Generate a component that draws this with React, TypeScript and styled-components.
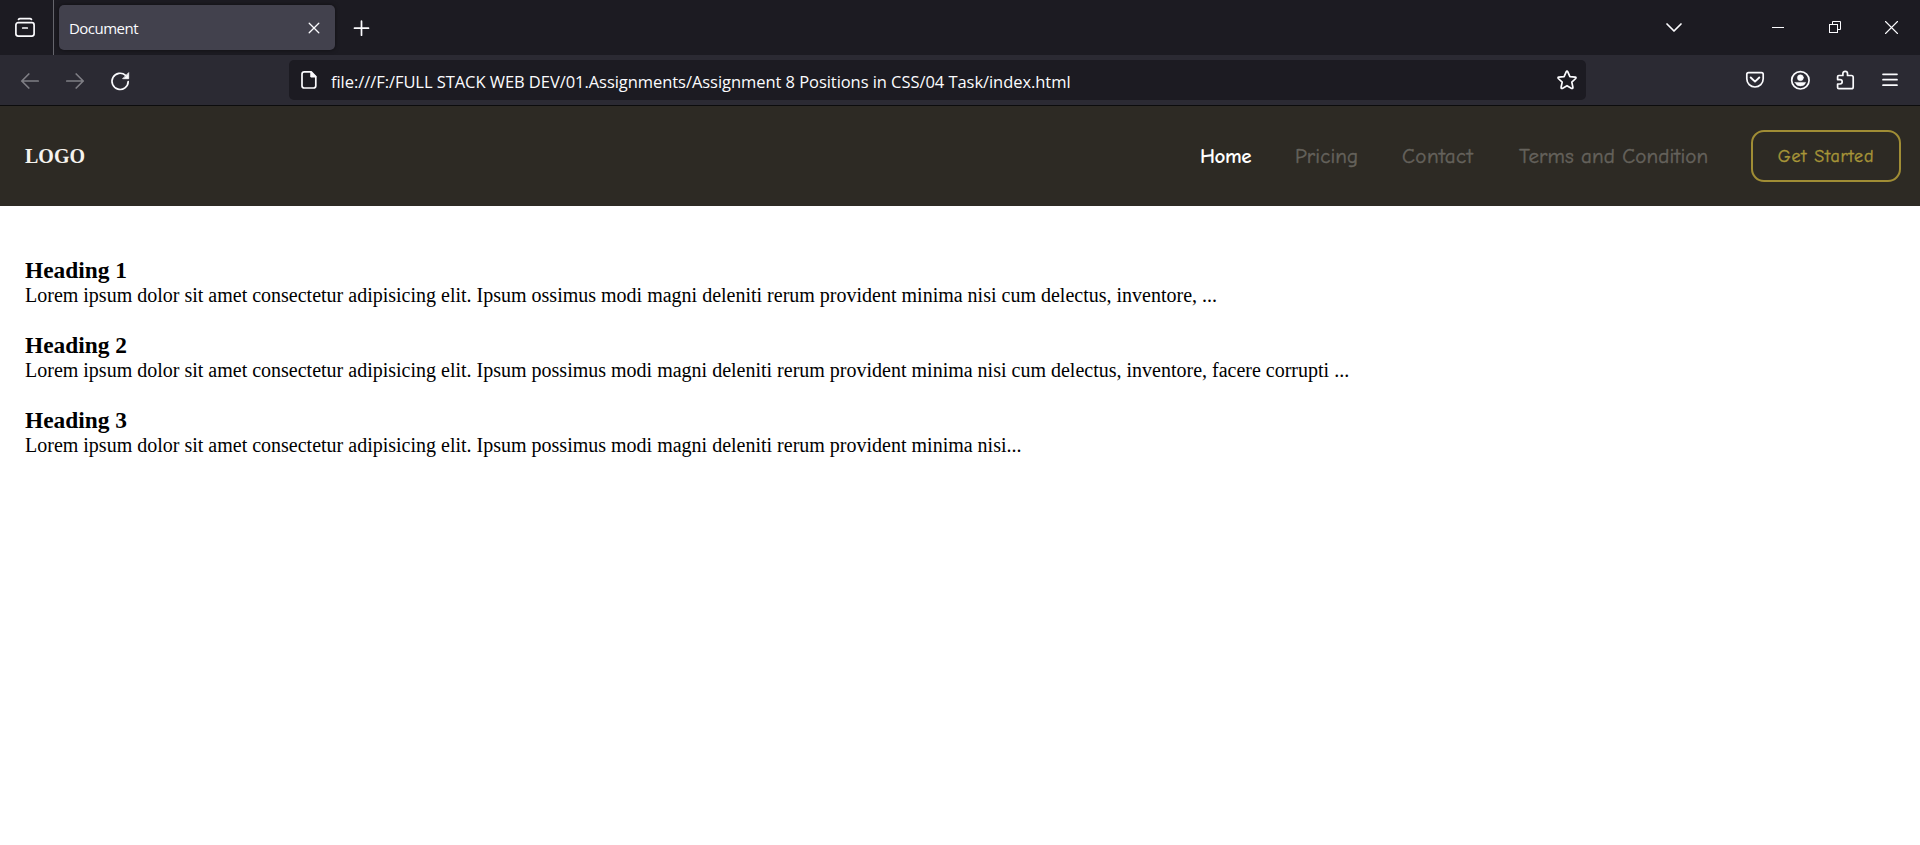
import React from "react";
import styled, { createGlobalStyle } from "styled-components";

const GlobalStyle = createGlobalStyle`
  * { box-sizing: border-box; }
  body {
    margin: 0;
    background: #fff;
    font-family: "Liberation Serif", "Times New Roman", serif;
  }
  h1, h2, p { margin: 0; }
`;

const Window = styled.div`
  display: flex;
  flex-direction: column;
  height: 845px;
  overflow: hidden;
`;

const TabStrip = styled.div`
  display: flex;
  height: 55px;
  background: #1c1b22;
  color: #fbfbfe;
`;

const ViewButton = styled.div`
  display: flex;
  align-items: center;
  width: 54px;
  padding-left: 13px;
  border-right: 1px solid #65656c;
`;

const Tab = styled.div`
  display: flex;
  align-items: center;
  justify-content: space-between;
  width: 276px;
  height: 45px;
  margin: 5px 0 0 5px;
  padding: 0 9px 0 10px;
  border-radius: 5px;
  background: #42414d;
  box-shadow: 0 0 4px rgba(0, 0, 0, 0.5);
`;

const TabTitle = styled.span`
  font: 15px/20px "Open Sans", sans-serif;
  letter-spacing: -0.52px;
`;

const NewTab = styled.div`
  display: flex;
  align-items: center;
  margin-left: 14px;
`;

const WindowControls = styled.div`
  display: flex;
  align-items: center;
  margin-left: auto;
  padding: 0 16px 2px 0;
`;

const Control = styled.div<{ $after?: number }>`
  display: flex;
  margin-right: ${(p) => p.$after ?? 0}px;
`;

const Toolbar = styled.div`
  display: flex;
  align-items: center;
  height: 51px;
  background: #2b2a33;
  border-bottom: 1px solid #0c0c0d;
  color: #fbfbfe;
`;

const History = styled.div`
  display: flex;
  align-items: center;
  gap: 21px;
  width: 289px;
  padding: 1px 0 0 18px;
`;

const AddressBar = styled.div`
  display: flex;
  align-items: center;
  width: 1297px;
  height: 40px;
  padding: 0 7px 0 8px;
  border-radius: 5px;
  background: #1c1b22;
`;

const Address = styled.span`
  flex: 1;
  padding: 3px 0 0 10px;
  font: 16.5px/22px "Open Sans", sans-serif;
  letter-spacing: -0.055px;
  white-space: nowrap;
`;

const Extensions = styled.div`
  display: flex;
  gap: 21px;
  margin-left: auto;
  padding-right: 18px;
`;

const Navbar = styled.header`
  display: flex;
  align-items: center;
  justify-content: space-between;
  height: 100px;
  padding: 0 19px 0 25px;
  background: #2d2a24;
`;

const Logo = styled.h1`
  color: #f5f3ee;
  font-size: 20px;
  line-height: 24px;
`;

const Links = styled.nav`
  display: flex;
  align-items: center;
  font-family: "Comic Neue", "Comic Sans MS", "Open Sans", sans-serif;
`;

const NavLink = styled.a<{ $width: number; $spacing: number; $active?: boolean }>`
  width: ${(p) => p.$width}px;
  margin-right: 43px;
  color: ${(p) => (p.$active ? "#fff" : "#65625c")};
  font-size: 21px;
  font-weight: ${(p) => (p.$active ? 700 : 400)};
  line-height: 28px;
  letter-spacing: ${(p) => p.$spacing}px;
  white-space: nowrap;
  -webkit-text-stroke: ${(p) => (p.$active ? 0 : 0.4)}px currentColor;
`;

const StartButton = styled.button`
  width: 150px;
  height: 52px;
  padding: 2px 0 0;
  border: 2px solid #a08d35;
  border-radius: 13px;
  background: transparent;
  color: #a89638;
  font: 400 18px/24px "Comic Neue", "Comic Sans MS", "Open Sans", sans-serif;
  letter-spacing: 0.85px;
  -webkit-text-stroke: 0.4px currentColor;
`;

const Content = styled.main`
  display: flex;
  flex-direction: column;
  gap: 25px;
  padding: 51px 25px 0;
  color: #000;
`;

const Heading = styled.h2`
  font-size: 23.4px;
  line-height: 27px;
`;

const Paragraph = styled.p`
  font-size: 20px;
  line-height: 23px;
`;

const Svg = styled.svg<{ $dim?: boolean }>`
  flex: none;
  fill: none;
  stroke: currentColor;
  stroke-width: 1.7;
  stroke-linecap: round;
  stroke-linejoin: round;
  opacity: ${(p) => (p.$dim ? 0.4 : 1)};
`;

type IconProps = { size?: number; dim?: boolean; children: React.ReactNode };

const Icon = ({ size = 24, dim, children }: IconProps) => (
  <Svg width={size} height={size} viewBox={`0 0 ${size} ${size}`} $dim={dim}>
    {children}
  </Svg>
);

const links = [
  { label: "Home", width: 52, spacing: -0.45, active: true },
  { label: "Pricing", width: 64, spacing: 0.1 },
  { label: "Contact", width: 74, spacing: 0.45 },
  { label: "Terms and Condition", width: 189, spacing: 0.13 },
];

const sections = [
  {
    title: "Heading 1",
    text: "Lorem ipsum dolor sit amet consectetur adipisicing elit. Ipsum ossimus modi magni deleniti rerum provident minima nisi cum delectus, inventore, ...",
  },
  {
    title: "Heading 2",
    text: "Lorem ipsum dolor sit amet consectetur adipisicing elit. Ipsum possimus modi magni deleniti rerum provident minima nisi cum delectus, inventore, facere corrupti ...",
  },
  {
    title: "Heading 3",
    text: "Lorem ipsum dolor sit amet consectetur adipisicing elit. Ipsum possimus modi magni deleniti rerum provident minima nisi...",
  },
];

export default function App() {
  return (
    <Window>
      <GlobalStyle />
      <TabStrip>
        <ViewButton>
          <Icon>
            <path d="M5.5 3.4Q6 2.7 7 2.7H17Q18 2.7 18.5 3.4" />
            <rect x="2.9" y="6.7" width="18.2" height="13.4" rx="2.3" />
            <path d="M9.7 12H14.3" />
          </Icon>
        </ViewButton>
        <Tab>
          <TabTitle>Document</TabTitle>
          <Icon>
            <path d="M7.2 7.2L16.8 16.8M16.8 7.2L7.2 16.8" strokeWidth="1.3" />
          </Icon>
        </Tab>
        <NewTab>
          <Icon>
            <path d="M12.5 5.2V19.2M5.5 12.2H19.5" />
          </Icon>
        </NewTab>
        <WindowControls>
          <Control $after={80}>
            <Icon>
              <path d="M4 9L11 16L18 9" />
            </Icon>
          </Control>
          <Control $after={33}>
            <Icon>
              <path d="M5 12.5H17" strokeWidth="1" strokeLinecap="butt" />
            </Icon>
          </Control>
          <Control $after={32}>
            <Icon>
              <g strokeWidth="1" strokeLinejoin="miter">
                <rect x="5.5" y="9.5" width="8" height="8" />
                <path d="M8.5 9.5V6.5H16.5V14.5H13.5" strokeLinecap="butt" />
              </g>
            </Icon>
          </Control>
          <Control>
            <Icon>
              <path d="M5.5 6.5L17.5 18.5M17.5 6.5L5.5 18.5" strokeWidth="1.1" />
            </Icon>
          </Control>
        </WindowControls>
      </TabStrip>
      <Toolbar>
        <History>
          <Icon dim>
            <path d="M20.2 12H3.8M10.8 5L3.8 12L10.8 19" />
          </Icon>
          <Icon dim>
            <path d="M3.8 12H20.2M13.2 5L20.2 12L13.2 19" />
          </Icon>
          <Icon>
            <path d="M20.2 12.5A8.1 8.1 0 1 1 17.6 6.4" />
            <path
              d="M20.7 4V9.7H15Z"
              fill="currentColor"
              strokeWidth="0.8"
            />
          </Icon>
        </History>
        <AddressBar>
          <Icon>
            <path d="M14.2 3.9H7.3Q5 3.9 5 6.2V17.7Q5 20 7.3 20H16.5Q18.8 20 18.8 17.7V8.5Z" />
            <path d="M13.8 4V9H18.8Z" fill="currentColor" strokeWidth="1" />
          </Icon>
          <Address>
            file:///F:/FULL STACK WEB DEV/01.Assignments/Assignment 8 Positions in CSS/04 Task/index.html
          </Address>
          <Icon>
            <path d="M12 3.1Q12.5 3.1 12.8 3.8L14.9 8.6L20.2 9.2Q21.5 9.5 20.7 10.5L16.8 14.1L17.9 19.3Q18 20.9 16.7 20.4L12 17.7L7.3 20.4Q6 20.9 6.1 19.3L7.2 14.1L3.3 10.5Q2.5 9.5 3.8 9.2L9.1 8.6L11.2 3.8Q11.5 3.1 12 3.1Z" />
          </Icon>
        </AddressBar>
        <Extensions>
          <Icon>
            <path d="M5.5 4.6H18.5Q20.2 4.6 20.2 6.3V10.8A8.2 8.2 0 0 1 3.8 10.8V6.3Q3.8 4.6 5.5 4.6Z" />
            <path d="M7.7 9.5L12 13.6L16.3 9.5" strokeWidth="1.9" />
          </Icon>
          <Icon>
            <circle cx="12.4" cy="12.3" r="8.7" />
            <circle cx="12.4" cy="9.7" r="3" fill="currentColor" strokeWidth="0.5" />
            <path
              d="M7.1 14.4H17.7Q16.5 17.9 12.4 17.9Q8.3 17.9 7.1 14.4Z"
              fill="currentColor"
              strokeWidth="0.5"
            />
          </Icon>
          <Icon>
            <path d="M5.8 7.5H9.9V5.6A2.3 2.3 0 0 1 14.5 5.6V7.5H18.4Q20.2 7.5 20.2 9.3V18.9Q20.2 20.7 18.4 20.7H5.8Q4.6 20.7 4.6 19.4V16H7A2.2 2.2 0 0 0 7 11.6H4.6V8.8Q4.6 7.5 5.8 7.5Z" />
          </Icon>
          <Icon>
            <path d="M5 6.3H19M5 11.7H19M5 17.2H19" />
          </Icon>
        </Extensions>
      </Toolbar>
      <Navbar>
        <Logo>LOGO</Logo>
        <Links>
          {links.map((l) => (
            <NavLink key={l.label} $width={l.width} $spacing={l.spacing} $active={l.active}>
              {l.label}
            </NavLink>
          ))}
          <StartButton>Get Started</StartButton>
        </Links>
      </Navbar>
      <Content>
        {sections.map((s) => (
          <section key={s.title}>
            <Heading>{s.title}</Heading>
            <Paragraph>{s.text}</Paragraph>
          </section>
        ))}
      </Content>
    </Window>
  );
}
